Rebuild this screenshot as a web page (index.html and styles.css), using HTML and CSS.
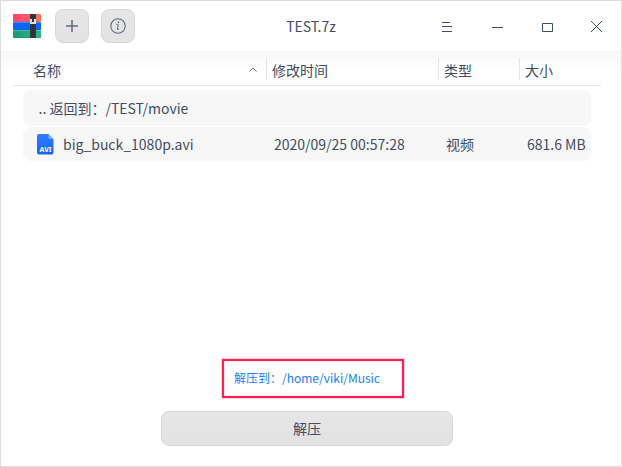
FILE: index.html
```html
<!DOCTYPE html>
<html lang="zh-CN">
<head>
<meta charset="utf-8">
<title>TEST.7z</title>
<link rel="stylesheet" href="styles.css">
</head>
<body>
<div class="window">
  <header class="titlebar">
    <div class="tools">
      <svg class="logo" width="28" height="26" viewBox="0 0 28 26">
        <defs>
          <linearGradient id="red"><stop offset="0" stop-color="#ff4378"/><stop offset="1" stop-color="#ff7458"/></linearGradient>
          <linearGradient id="green"><stop offset="0" stop-color="#1b9c77"/><stop offset="1" stop-color="#2bb588"/></linearGradient>
        </defs>
        <rect y="1" width="28" height="8" rx="1" fill="url(#red)"/>
        <rect y="9" width="28" height="8" rx="1" fill="#0b65ff"/>
        <rect y="17" width="28" height="8" rx="1" fill="url(#green)"/>
        <path d="M0 9.500h28M0 17.500h28" stroke="#fff" stroke-opacity=".22"/>
        <path d="M0 8.500h28M0 16.500h28M0 24.500h28" stroke="#173b69" stroke-opacity=".12"/>
        <path d="M2 4.500h3M6 5.500h3M2 12.500h3M6 13.500h3M2 20.500h3M6 21.500h3" stroke="#243b70" stroke-opacity=".18"/>
        <path d="M17 1h6v24h-6z" fill="#343740"/>
        <path d="M20 1v24" stroke="#20232b" stroke-dasharray="1 1"/>
        <path d="M17 6h6v5h-6z" fill="#e5e3e2"/>
        <path d="M19 6h2v3h-2z" fill="#30333c"/>
      </svg>
      <button class="tool"><svg width="14" height="14" viewBox="0 0 14 14" fill="none" stroke="#596984" stroke-width="1.500"><path d="M7 1v12M1 7h12"/></svg></button>
      <button class="tool"><svg width="16" height="16" viewBox="0 0 16 16" fill="none" stroke="#596984"><circle cx="8" cy="8" r="7.200" stroke-width="1.100"/><path d="M6.400 6.700h1.900L7.300 11.300h1.700" stroke-width="1"/><circle cx="8.600" cy="4.400" r=".8" fill="#596984" stroke="none"/></svg></button>
    </div>
    <div class="title">TEST.7z</div>
    <nav class="controls">
      <svg width="50" height="50" viewBox="0 0 50 50"><path d="M21 21.500h8M21 25.500h10M21 30.500h10"/></svg>
      <svg width="50" height="50" viewBox="0 0 50 50"><path d="M21 26.500h11"/></svg>
      <svg width="50" height="50" viewBox="0 0 50 50"><path d="M21.500 22.500h10v8h-10z"/></svg>
      <svg width="50" height="50" viewBox="0 0 50 50"><path d="M20 20l11 11M31 20l-11 11"/></svg>
    </nav>
  </header>
  <main class="content">
    <div class="columns">
      <div class="column name"><span>名称</span><svg width="8" height="5" viewBox="0 0 8 5"><path d="M.5 4.500L4 1l3.500 3.500" fill="none" stroke="#596984"/></svg></div>
      <div class="column">修改时间</div>
      <div class="column">类型</div>
      <div class="column">大小</div>
    </div>
    <div class="rows">
      <div class="row parent">.. 返回到：/TEST/movie</div>
      <div class="row file">
        <div class="file-name">
          <svg width="17" height="21" viewBox="0 0 17 21">
            <defs><linearGradient id="file" x2="0" y2="1"><stop stop-color="#347cff"/><stop offset="1" stop-color="#1165ff"/></linearGradient></defs>
            <path d="M2 0h9.500L16.500 5V18.500a2 2 0 0 1-2 2H2a2 2 0 0 1-2-2V2a2 2 0 0 1 2-2z" fill="url(#file)"/>
            <path d="M11.500 0v3.500a1.500 1.500 0 0 0 1.500 1.500h3.500z" fill="#82aeff"/>
            <text class="file-type" x="8.500" y="18" text-anchor="middle">AVI</text>
          </svg>
          <span>big_buck_1080p.avi</span>
        </div>
        <div>2020/09/25 00:57:28</div>
        <div>视频</div>
        <div>681.6 MB</div>
      </div>
    </div>
  </main>
  <footer class="footer">
    <div class="destination">解压到：/home/viki/Music</div>
    <button class="extract">解压</button>
  </footer>
</div>
</body>
</html>
```

FILE: styles.css
```css
* { box-sizing: border-box; }
body { margin: 0; }
body, button { font: 14px/20px "Noto Sans CJK SC", sans-serif; color: #414d68; }
svg { display: block; flex: none; }
.window {
  width: 622px;
  height: 467px;
  border: 1px solid #dcdcdc;
  background: #fff;
  display: flex;
  flex-direction: column;
  overflow: hidden;
}
.titlebar {
  height: 50px;
  display: grid;
  grid-template-columns: 200px 220px 200px;
  align-items: center;
}
.tools { display: flex; align-items: center; padding-left: 12px; }
.logo { margin-right: 14px; }
.tool {
  width: 34px;
  height: 34px;
  padding: 0;
  margin-right: 12px;
  display: grid;
  place-items: center;
  border: 1px solid #d8d8d8;
  border-radius: 8px;
  background: linear-gradient(#e6e6e6, #e3e3e3);
}
.title { text-align: center; }
.controls { display: flex; fill: none; stroke: #414d68; }
.content {
  flex: 1;
  padding: 0 20px 0 12px;
  background: linear-gradient(#f7f7f7, #fff 20px);
}
.columns {
  display: grid;
  grid-template-columns: 253px 172px 81px 1fr;
  height: 35px;
  padding-top: 7px;
  border-bottom: 1px solid #e5e5e5;
}
.column {
  height: 22px;
  padding-left: 5px;
  line-height: 25px;
  border-left: 1px solid #e5e5e5;
}
.column.name {
  display: flex;
  align-items: center;
  justify-content: space-between;
  padding: 0 9px 0 20px;
  border: 0;
}
.column.name span { padding-top: 2px; }
.rows { padding: 4px 10px 0; }
.row { background: #f7f7f7; border-radius: 8px; }
.parent { height: 36px; padding-left: 15.5px; line-height: 36px; }
.file {
  height: 34px;
  margin-top: 1px;
  display: grid;
  grid-template-columns: 251px 172px 81px 1fr;
  align-items: center;
}
.file-name { display: flex; align-items: center; gap: 9px; padding-left: 14px; }
.file-type { font: bold 7px "Noto Sans", sans-serif; fill: #fff; }
.footer { display: flex; flex-direction: column; align-items: center; padding: 0 0 20px; }
.destination {
  width: 182px;
  height: 39px;
  margin: 0 4px 13px 8px;
  padding-left: 10px;
  border: 2px solid #ff1f4f;
  box-shadow: 0 0 0 1px #ffd5de, inset 0 0 0 1px #ffe8ed;
  color: #1681ff;
  font-size: 12px;
  line-height: 34px;
}
.extract {
  width: 292px;
  height: 35px;
  margin-right: 8px;
  padding: 0 0 2px;
  border: 1px solid #d8d8d8;
  border-radius: 8px;
  background: linear-gradient(#e6e6e6, #e2e2e2);
}
```
